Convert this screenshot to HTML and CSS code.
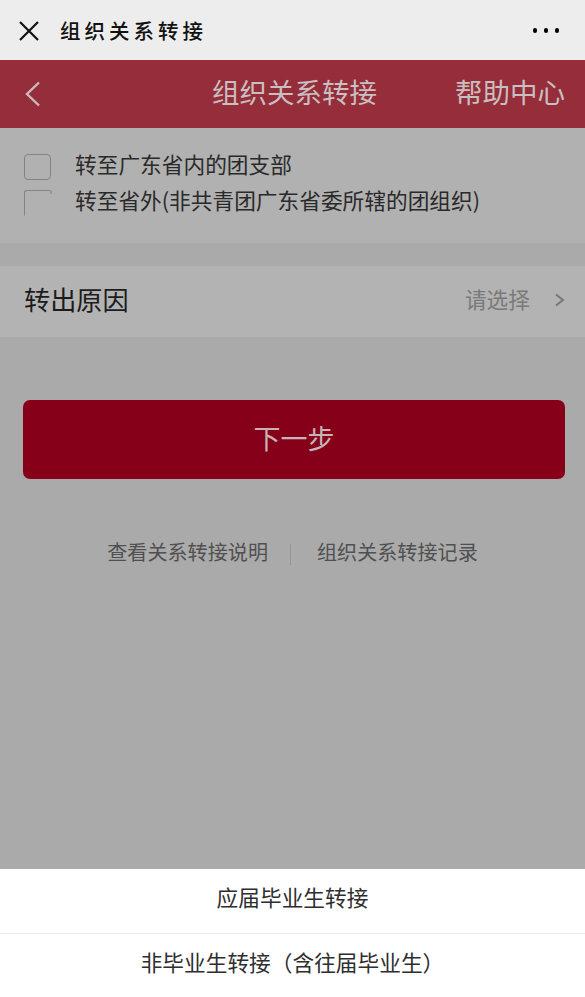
FILE: index.html
```html
<!DOCTYPE html>
<html lang="zh-CN">
<head>
<meta charset="utf-8">
<title>组织关系转接</title>
<link rel="stylesheet" href="styles.css">
</head>
<body>
<div class="app">
  <div class="wx-bar">
    <svg class="wx-close" width="20" height="20" viewBox="0 0 20 20"><path d="M1 1 L19 19 M19 1 L1 19" stroke="#111" stroke-width="2.2" fill="none"/></svg>
    <span class="wx-title">组织关系转接</span>
    <span class="wx-more"><i></i><i></i><i></i></span>
  </div>
  <div class="page">
    <header class="header">
      <div class="header-left">
        <svg width="18" height="26" viewBox="0 0 18 26"><path d="M15 1.5 L3 13 L15 24.5" stroke="#c9bcbe" stroke-width="2.4" fill="none"/></svg>
      </div>
      <div class="header-title">组织关系转接</div>
      <div class="header-right">帮助中心</div>
    </header>
    <section class="options">
      <div class="option"><span class="checkbox"></span><span class="option-label">转至广东省内的团支部</span></div>
      <div class="option"><span class="checkbox checkbox-broken"></span><span class="option-label">转至省外(非共青团广东省委所辖的团组织)</span></div>
    </section>
    <div class="reason">
      <span class="reason-label">转出原因</span>
      <span class="reason-value">请选择
        <svg width="11" height="14" viewBox="0 0 11 14"><path d="M2 1.5 L9 7 L2 12.5" stroke="#777" stroke-width="2" fill="none"/></svg>
      </span>
    </div>
    <button class="next">下一步</button>
    <div class="links">
      <span>查看关系转接说明</span>
      <span class="sep"></span>
      <span>组织关系转接记录</span>
    </div>
  </div>
  <div class="sheet">
    <div class="sheet-item">应届毕业生转接</div>
    <div class="sheet-item">非毕业生转接（含往届毕业生）</div>
  </div>
</div>
</body>
</html>
```
FILE: styles.css
```css
* { box-sizing: border-box; }
html, body { margin: 0; padding: 0; }
body {
  width: 585px;
  height: 997px;
  overflow: hidden;
  font-family: "Noto Sans CJK SC", "Noto Sans", sans-serif;
}
.app {
  display: flex;
  flex-direction: column;
  height: 997px;
}
.wx-bar {
  height: 60px;
  background: #ededed;
  display: flex;
  align-items: center;
  padding: 0 26px 0 19px;
}
.wx-close { display: block; margin-top: 1px; }
.wx-title {
  margin-left: 21px;
  font-size: 20.5px;
  font-weight: 500;
  letter-spacing: 4px;
  color: #111;
  line-height: 1;
}
.wx-more {
  margin-left: auto;
  display: flex;
  gap: 6.5px;
  margin-top: 1px;
}
.wx-more i {
  display: block;
  width: 4.5px;
  height: 4.5px;
  border-radius: 50%;
  background: #000;
}
.page {
  flex: 1;
  background: #aaaaaa;
  display: flex;
  flex-direction: column;
}
.header {
  height: 68px;
  background: #962d3a;
  display: grid;
  grid-template-columns: 1fr auto 1fr;
  align-items: center;
  padding: 0 20px 4px 24px;
}
.header-left svg { display: block; margin-top: 3px; }
.header-title {
  font-size: 27.5px;
  color: #c9bfc0;
  line-height: 1;
}
.header-right {
  justify-self: end;
  font-size: 27.5px;
  color: #c9bfc0;
  line-height: 1;
}
.options {
  background: #b1b1b1;
  padding: 21px 0 22px 24px;
}
.option {
  height: 36px;
  display: flex;
  align-items: center;
}
.checkbox {
  width: 27px;
  height: 26px;
  border: 1.5px solid #848484;
  border-radius: 4px;
  flex-shrink: 0;
}
.checkbox-broken {
  border-right-color: transparent;
  border-bottom-color: transparent;
  border-radius: 3px 2px 0 0;
  position: relative;
}
.checkbox-broken::after {
  content: "";
  position: absolute;
  right: -1.5px;
  top: -1.5px;
  width: 1.5px;
  height: 4px;
  background: #9a9a9a;
}
.option-label {
  margin-left: 24px;
  margin-bottom: 7px;
  font-size: 21.7px;
  color: #2a2a2a;
  line-height: 1;
}
.reason {
  margin-top: 23px;
  height: 71px;
  background: #b3b3b3;
  display: flex;
  align-items: center;
  padding: 0 20px 4px 24px;
}
.reason-label {
  font-size: 26.2px;
  color: #1c1c1c;
  line-height: 1;
}
.reason-value {
  margin-left: auto;
  display: flex;
  align-items: center;
  font-size: 21.7px;
  color: #7a7a7a;
  line-height: 1;
  margin-top: -2px;
}
.reason-value svg { margin-left: 24px; margin-top: 3px; display: block; }
.next {
  margin: 63px 20px 0 23px;
  height: 79px;
  border: 0;
  border-radius: 7px;
  background: #870019;
  color: #c4b4b7;
  font-family: inherit;
  font-size: 27px;
  line-height: 1;
  padding: 0 0 4px;
}
.links {
  margin-top: 58px;
  height: 30px;
  display: flex;
  justify-content: center;
  align-items: center;
  font-size: 20.1px;
  color: #505050;
  line-height: 1;
}
.sep {
  width: 1px;
  height: 21px;
  background: #959595;
  margin: 4px 26px 0 22px;
}
.sheet {
  background: #fff;
}
.sheet-item {
  height: 64px;
  display: flex;
  align-items: center;
  justify-content: center;
  font-size: 21.7px;
  color: #2e2e2e;
  line-height: 1;
  padding-bottom: 8px;
}
.sheet-item + .sheet-item {
  border-top: 1px solid #ececec;
  height: 64px;
}
```
